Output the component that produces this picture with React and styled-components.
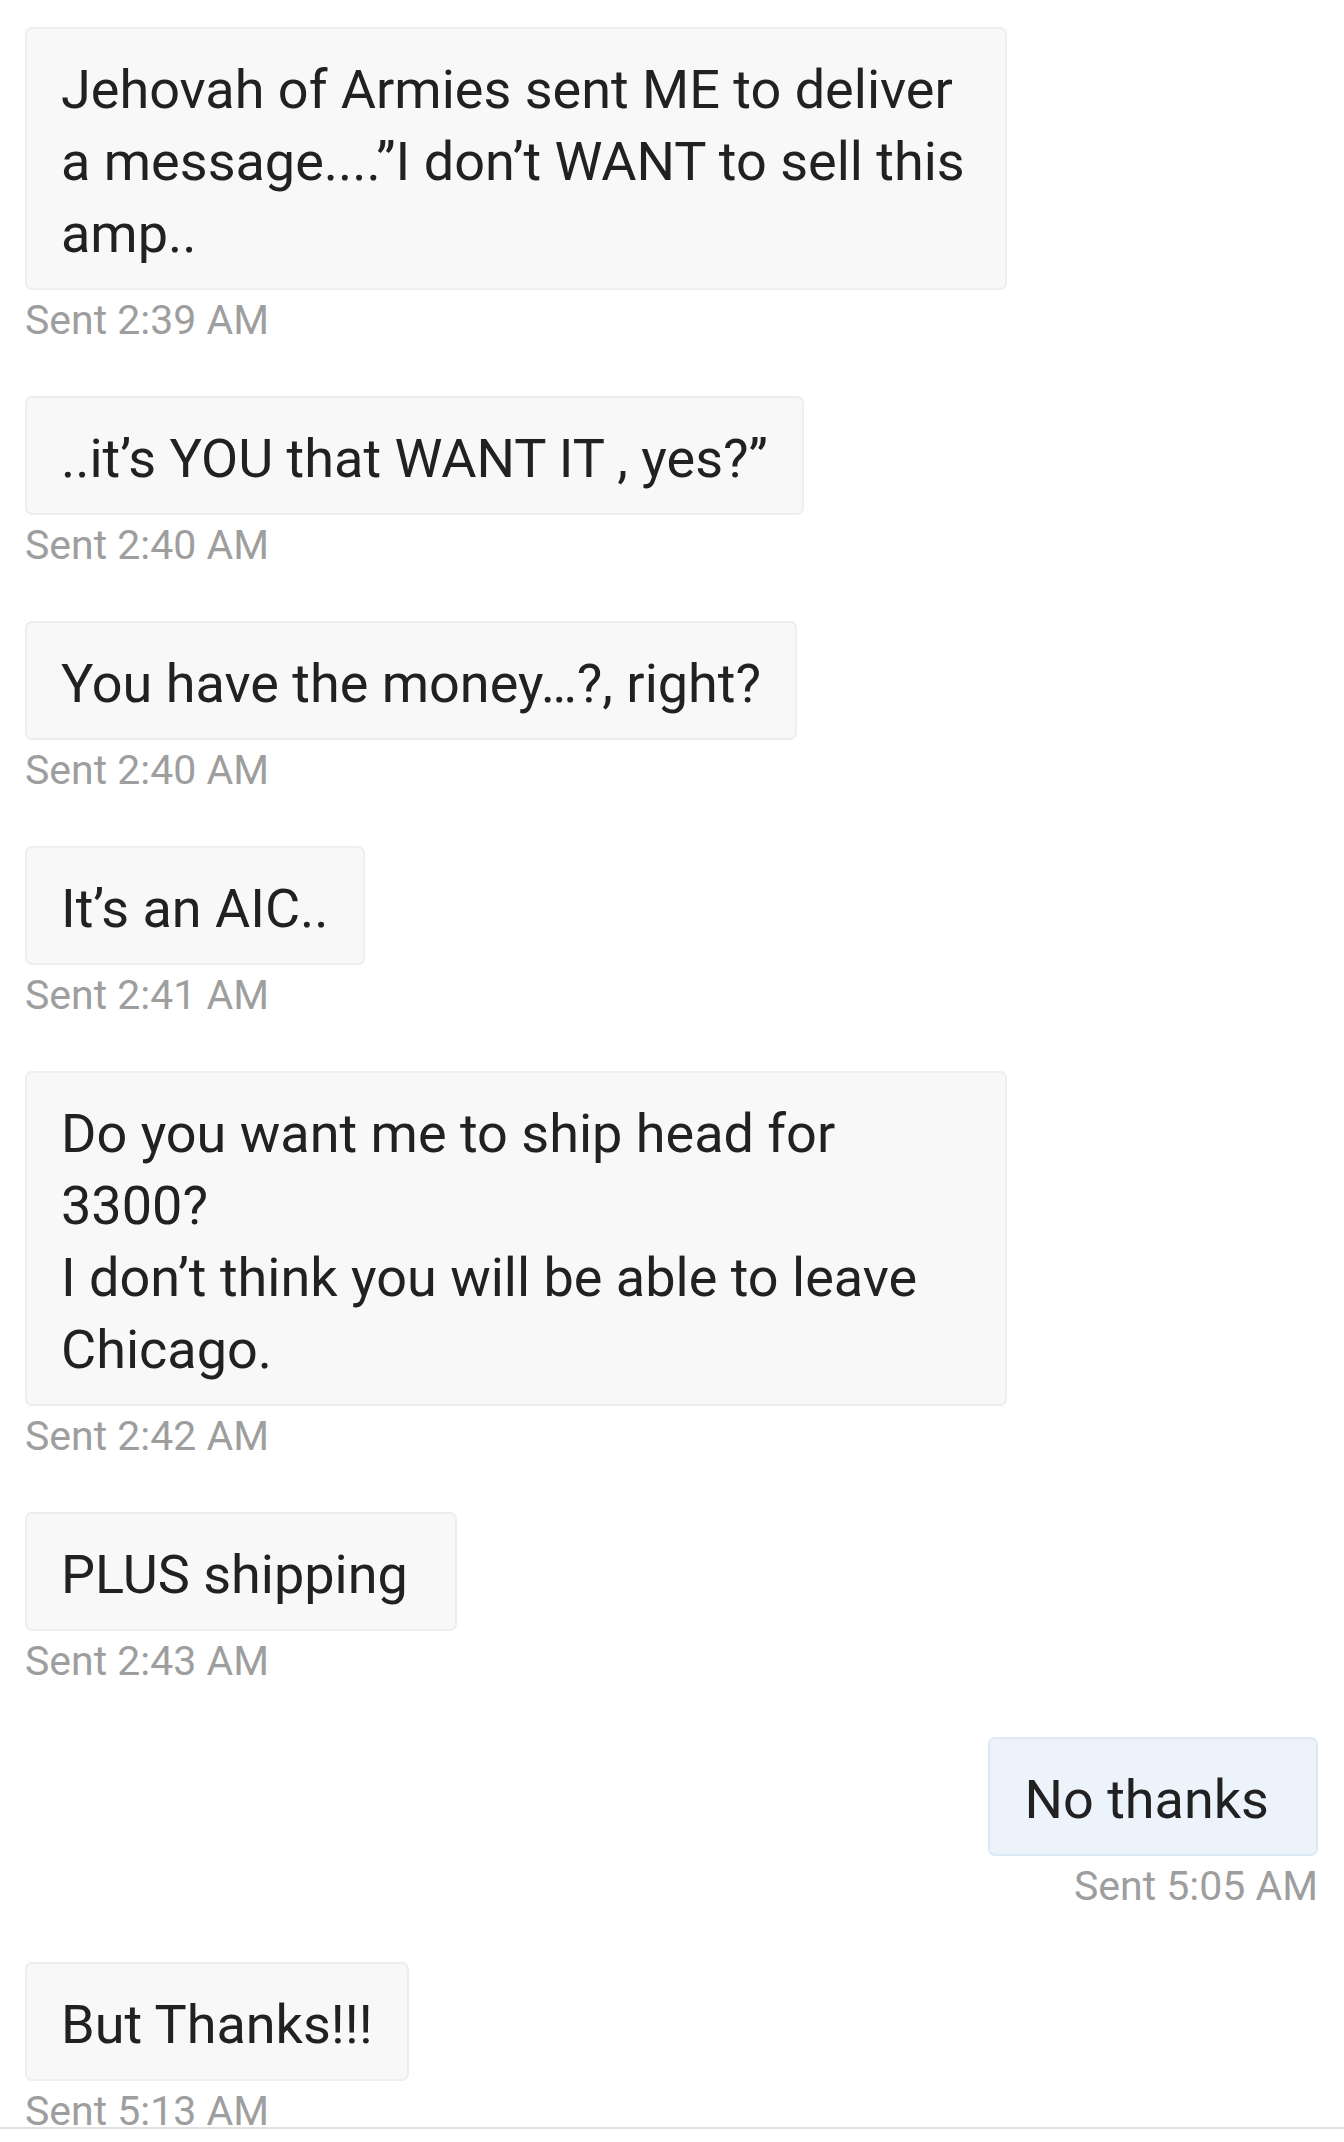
import React from 'react';
import styled, { createGlobalStyle } from 'styled-components';

const messages = [
  { text: 'Jehovah of Armies sent ME to deliver\na message....”I don’t WANT to sell this\namp..', time: 'Sent 2:39 AM', wide: true },
  { text: '..it’s YOU that WANT IT , yes?”', time: 'Sent 2:40 AM' },
  { text: 'You have the money…?, right?', time: 'Sent 2:40 AM' },
  { text: 'It’s an AIC..', time: 'Sent 2:41 AM' },
  { text: 'Do you want me to ship head for\n3300?\nI don’t think you will be able to leave\nChicago.', time: 'Sent 2:42 AM', wide: true },
  { text: 'PLUS shipping', time: 'Sent 2:43 AM', trailing: true },
  { text: 'No thanks', time: 'Sent 5:05 AM', mine: true, trailing: true },
  { text: 'But Thanks!!!', time: 'Sent 5:13 AM' },
];

const App = () => {
  return (
    <Screen>
      <GlobalStyle />
      <Thread>
        {messages.map((m, i) => (
          <Message key={i} $mine={m.mine}>
            <Bubble $mine={m.mine} $wide={m.wide} $trailing={m.trailing}>
              {m.text}
            </Bubble>
            <Time>{m.time}</Time>
          </Message>
        ))}
      </Thread>
      <Composer />
    </Screen>
  );
};

export default App;

const GlobalStyle = createGlobalStyle`
  html, body {
    margin: 0;
    padding: 0;
    background: #ffffff;
  }
  body {
    font-family: Roboto, "Noto Sans", sans-serif;
  }
`;

const Screen = styled.div`
  width: 1344px;
  height: 2142px;
  display: flex;
  flex-direction: column;
  background: #ffffff;
  overflow: hidden;
`;

const Thread = styled.div`
  height: 2127px;
  overflow: hidden;
  display: flex;
  flex-direction: column;
  gap: 52px;
  padding: 27px 26px 0 25px;
  box-sizing: border-box;
`;

const Message = styled.div`
  display: flex;
  flex-direction: column;
  align-items: ${(p) => (p.$mine ? 'flex-end' : 'flex-start')};
  flex-shrink: 0;
`;

const Bubble = styled.div`
  box-sizing: border-box;
  width: ${(p) => (p.$wide ? '982px' : 'auto')};
  padding: 25px ${(p) => (p.$trailing ? '47px' : '34px')} 18px 34px;
  white-space: pre-line;
  font-size: 54px;
  line-height: 72px;
  color: #212121;
  background: ${(p) => (p.$mine ? '#ecf3fb' : '#f8f8f8')};
  border: 2px solid ${(p) => (p.$mine ? '#dde9f6' : '#eeeeee')};
  border-radius: 7px;
`;

const Time = styled.div`
  margin-top: 6px;
  font-size: 41px;
  line-height: 48px;
  color: #9e9e9e;
`;

const Composer = styled.div`
  flex: 1;
  border-top: 2px solid #e0e0e0;
  background: #ffffff;
`;
